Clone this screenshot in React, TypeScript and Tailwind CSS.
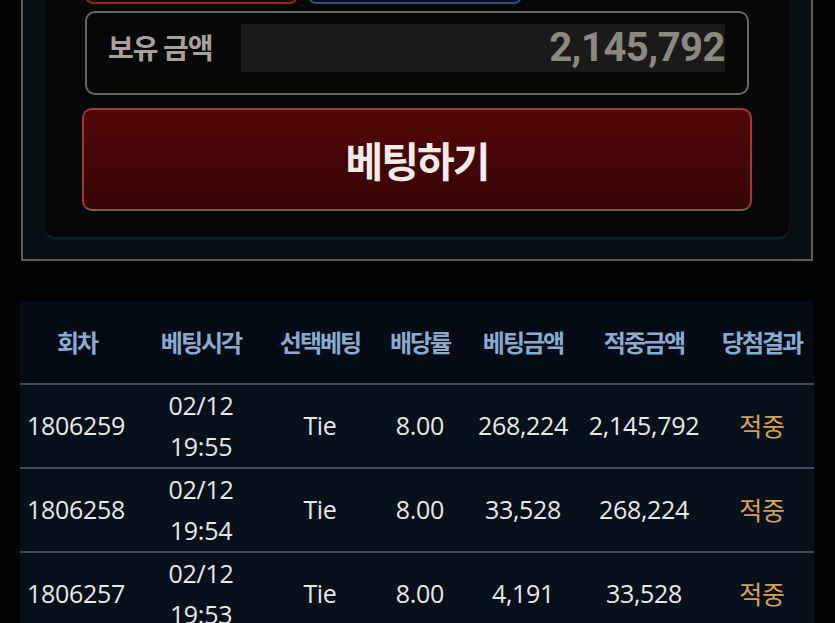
const rows = [
  { round: "1806259", date: "02/12", time: "19:55", pick: "Tie", odds: "8.00", bet: "268,224", win: "2,145,792", result: "적중" },
  { round: "1806258", date: "02/12", time: "19:54", pick: "Tie", odds: "8.00", bet: "33,528", win: "268,224", result: "적중" },
  { round: "1806257", date: "02/12", time: "19:53", pick: "Tie", odds: "8.00", bet: "4,191", win: "33,528", result: "적중" },
];

const headers = ["회차", "베팅시각", "선택베팅", "배당률", "베팅금액", "적중금액", "당첨결과"];
const colWidths = ["w-[114px]", "w-[134px]", "w-[104px]", "w-[96px]", "w-[110px]", "w-[132px]", "w-[104px]"];

export default function App() {
  return (
    <div className="h-[623px] w-full overflow-hidden bg-[#020202] font-['Noto_Sans_CJK_KR',sans-serif]">
      {/* Bet panel (top is scrolled out of view) */}
      <div className="-mt-[80px] ml-[21px] w-[792px] border-2 border-[#5f5a51] bg-[#061014] px-[21px] pb-[21px]">
        <div className="rounded-[12px] border border-[#0c1114] border-b-[#1c2226] bg-[#050708] px-[37px] pb-[26px] pt-[20px] shadow-[0_2px_2px_rgba(150,150,150,0.1)]">
          <div className="flex gap-[10px] px-[3px]">
            <div className="h-[61px] w-[213px] rounded-[8px] border-2 border-[#8e2a22] bg-[#1a0605]" />
            <div className="h-[61px] w-[214px] rounded-[8px] border-2 border-[#3b4a7a] bg-[#070b1a]" />
          </div>

          {/* Balance */}
          <div className="mx-[3px] mt-[7px] flex h-[84px] items-start rounded-[10px] border-2 border-[#6b655b] bg-[#070707] pl-[21px] pr-[22px] pt-[11px]">
            <span className="mt-[6px] w-[133px] text-[28px] font-bold leading-[34px] tracking-[-1px] text-[#a6a299]">
              보유 금액
            </span>
            <div className="flex h-[48px] flex-1 items-center justify-end bg-[#1a1a1a]">
              <span className="font-['Roboto',sans-serif] text-[40px] font-bold leading-none tracking-[-0.5px] text-[#8c8880]">
                2,145,792
              </span>
            </div>
          </div>

          {/* Bet button */}
          <button className="mt-[13px] flex h-[103px] w-full items-center justify-center rounded-[10px] border-2 border-[#a03a32] border-b-[#7a5e55] bg-gradient-to-b from-[#520807] to-[#360303]">
            <span className="text-[41px] font-bold leading-none tracking-[-2px] text-[#f4ebe6]">베팅하기</span>
          </button>
        </div>
      </div>

      {/* History table */}
      <div className="ml-[20px] mt-[40px] w-[794px] bg-[#050b14]">
        <div className="flex h-[82px] items-center">
          {headers.map((h, i) => (
            <div
              key={h}
              className={`${colWidths[i]} text-center text-[24px] font-bold tracking-[-2px] text-[#88acd0]`}
            >
              {h}
            </div>
          ))}
        </div>
        {rows.map((r) => (
          <div key={r.round} className="flex h-[84px] items-center border-t-2 border-[#3c4a57] bg-[#06101a] font-['Open_Sans','Noto_Sans_CJK_KR',sans-serif] text-[25px] tracking-[-0.3px] text-[#e8e8e8]">
            <div className={`${colWidths[0]} pl-[7px] text-left`}>{r.round}</div>
            <div className={`${colWidths[1]} text-center leading-[41px]`}>
              <div>{r.date}</div>
              <div>{r.time}</div>
            </div>
            <div className={`${colWidths[2]} text-center`}>{r.pick}</div>
            <div className={`${colWidths[3]} text-center`}>{r.odds}</div>
            <div className={`${colWidths[4]} text-center`}>{r.bet}</div>
            <div className={`${colWidths[5]} text-center`}>{r.win}</div>
            <div className={`${colWidths[6]} text-center font-['Noto_Sans_CJK_KR',sans-serif] text-[#d9a04c]`}>{r.result}</div>
          </div>
        ))}
      </div>
    </div>
  );
}
